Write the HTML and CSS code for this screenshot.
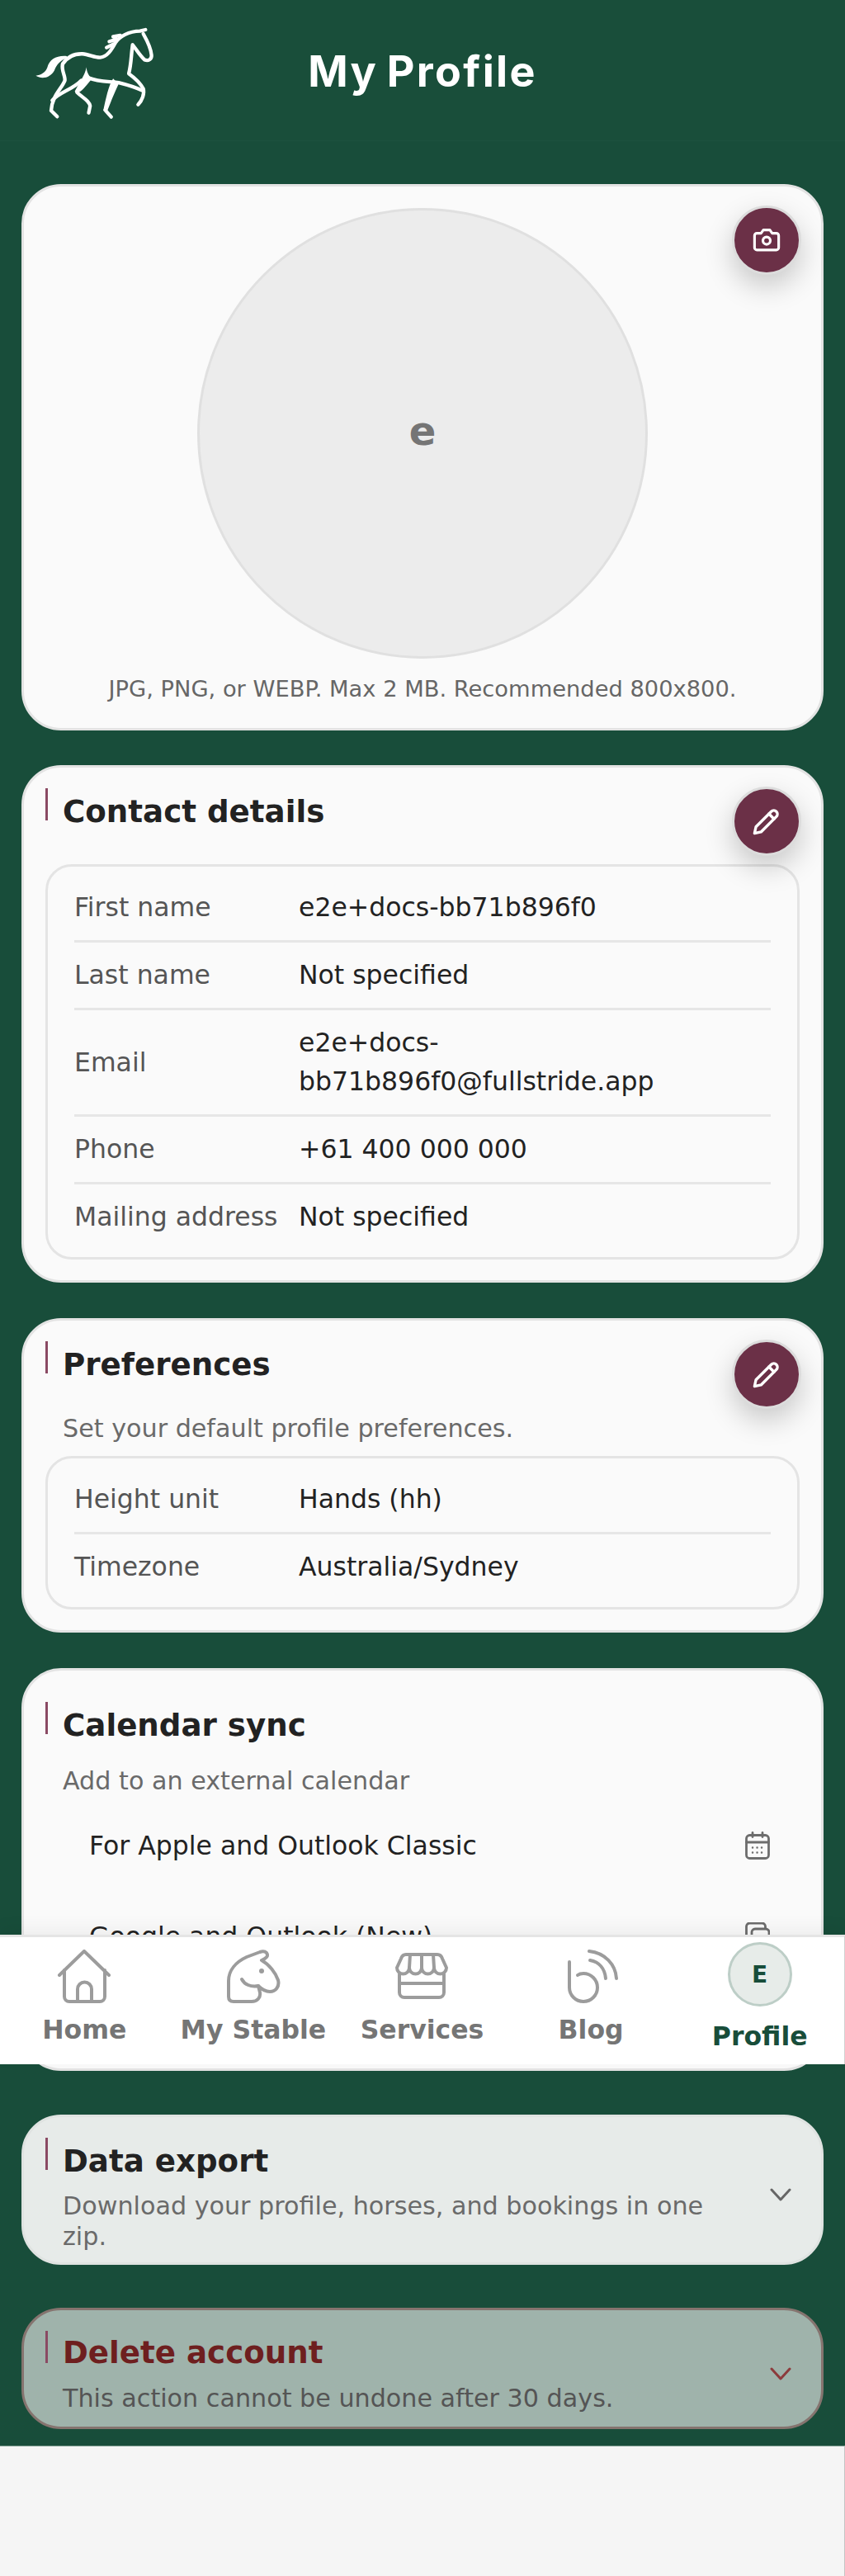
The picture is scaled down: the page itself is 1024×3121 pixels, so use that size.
FILE: index.html
```html
<!DOCTYPE html>
<html lang="en">
<head>
    <meta charset="UTF-8">
    <meta name="viewport" content="width=device-width, initial-scale=1.0">
    <title>My Profile</title>
    <link rel="stylesheet" href="styles.css">
</head>
<body>
    <div class="app">
        <!-- Header -->
        <header class="topbar">
            <svg class="logo" viewBox="120 35 445 340" fill="none" stroke="#fff" stroke-width="13" stroke-linecap="round" stroke-linejoin="round">
                <path d="M228 172C245 146 270 134 300 135C325 137 345 149 365 148C390 146 405 122 420 95C435 72 470 52 510 52L530 47"/>
                <path d="M522 62C535 85 550 115 552 140C553 155 540 162 527 157C512 145 497 120 483 102C478 135 478 175 469 207C490 222 510 240 522 262C527 280 518 305 503 320"/>
                <path d="M228 172C222 195 238 215 236 232C225 262 190 285 186 342L208 364"/>
                <path d="M190 305C215 275 265 265 296 232"/>
                <path d="M322 222C360 238 400 235 432 240C460 247 490 255 516 268"/>
                <path d="M280 275C300 295 325 305 328 325L323 350"/>
                <path d="M383 340L405 365"/>
                <path d="M412 100L388 112M425 82L398 90M438 68L412 72"/>
                <path fill="#fff" stroke="none" d="M243 143C205 140 180 155 172 185C165 205 148 212 130 215C155 230 185 220 198 195C205 175 220 158 243 150Z"/>
                <path fill="#fff" stroke="none" d="M314 183C312 205 300 222 272 272C290 285 305 260 335 225C322 215 316 200 314 183Z"/>
                <path fill="#fff" stroke="none" d="M412 225L432 245C415 280 400 320 390 345L376 342C385 300 395 250 412 225Z"/>
            </svg>
            <h1 class="page-title">My Profile</h1>
        </header>

        <main class="content">
            <!-- Photo -->
            <section class="card photo-card">
                <button class="fab">
                    <svg viewBox="0 0 32 32" fill="none" stroke="#fff" stroke-width="2.8" stroke-linejoin="round">
                        <path d="M3 11a2.500 2.500 0 0 1 2.500-2.500H10L12.500 5h7L22 8.500h4.500A2.500 2.500 0 0 1 29 11v13a2.500 2.500 0 0 1-2.500 2.500h-21A2.500 2.500 0 0 1 3 24z"/>
                        <circle cx="16" cy="16.500" r="4"/>
                    </svg>
                </button>
                <div class="avatar">e</div>
                <p class="photo-hint">JPG, PNG, or WEBP. Max 2 MB. Recommended 800x800.</p>
            </section>

            <!-- Contact details -->
            <section class="card contact-card">
                <button class="fab">
                    <svg viewBox="0 0 32 32" fill="none" stroke="#fff" stroke-width="3" stroke-linejoin="round" stroke-linecap="round">
                        <path d="M3 29l1.500-7L21 5.500a3.500 3.500 0 0 1 5.500 5.500L10 27.500z"/>
                        <path d="M18.500 8l5.500 5.500"/>
                    </svg>
                </button>
                <div class="section-head">
                    <span class="accent"></span>
                    <h2 class="section-title">Contact details</h2>
                </div>
                <div class="panel">
                    <div class="row"><span class="row-label">First name</span><span class="row-value">e2e+docs-bb71b896f0</span></div>
                    <div class="row"><span class="row-label">Last name</span><span class="row-value">Not specified</span></div>
                    <div class="row"><span class="row-label">Email</span><span class="row-value">e2e+docs-<br>bb71b896f0@fullstride.app</span></div>
                    <div class="row"><span class="row-label">Phone</span><span class="row-value">+61 400 000 000</span></div>
                    <div class="row"><span class="row-label">Mailing address</span><span class="row-value">Not specified</span></div>
                </div>
            </section>

            <!-- Preferences -->
            <section class="card prefs-card">
                <button class="fab">
                    <svg viewBox="0 0 32 32" fill="none" stroke="#fff" stroke-width="3" stroke-linejoin="round" stroke-linecap="round">
                        <path d="M3 29l1.500-7L21 5.500a3.500 3.500 0 0 1 5.500 5.500L10 27.500z"/>
                        <path d="M18.500 8l5.500 5.500"/>
                    </svg>
                </button>
                <div class="section-head">
                    <span class="accent"></span>
                    <h2 class="section-title">Preferences</h2>
                </div>
                <p class="section-desc prefs-desc">Set your default profile preferences.</p>
                <div class="panel prefs-panel">
                    <div class="row"><span class="row-label">Height unit</span><span class="row-value">Hands (hh)</span></div>
                    <div class="row"><span class="row-label">Timezone</span><span class="row-value">Australia/Sydney</span></div>
                </div>
            </section>

            <!-- Calendar sync -->
            <section class="card calendar-card">
                <div class="section-head">
                    <span class="accent"></span>
                    <h2 class="section-title">Calendar sync</h2>
                </div>
                <p class="section-desc calendar-desc">Add to an external calendar</p>
                <div class="sync-row">
                    <span>For Apple and Outlook Classic</span>
                    <svg class="sync-icon" viewBox="0 0 30 34" fill="none" stroke="#6d6d6d" stroke-width="2.8" stroke-linecap="round">
                        <rect x="1.500" y="4.500" width="27" height="28" rx="4"/>
                        <path d="M1.500 13h27M9 1.500v5M21 1.500v5"/>
                        <path stroke-width="2.400" stroke-dasharray="0.1 5.4" d="M9 19.500h13M9 25.500h13"/>
                    </svg>
                </div>
                <div class="sync-row">
                    <span>Google and Outlook (New)</span>
                    <svg class="sync-icon" viewBox="0 0 30 34" fill="none" stroke="#6d6d6d" stroke-width="2.8" stroke-linecap="round">
                        <path d="M1.500 24V5a4 4 0 0 1 4-4h15a4 4 0 0 1 4 4v2"/>
                        <rect x="8" y="8" width="21" height="24" rx="4"/>
                    </svg>
                </div>
            </section>

            <!-- Collapsed sections -->
            <section class="card collapse-card export-card">
                <div class="collapse-text">
                    <div class="section-head">
                        <span class="accent"></span>
                        <h2 class="section-title">Data export</h2>
                    </div>
                    <p class="section-desc">Download your profile, horses, and bookings in one zip.</p>
                </div>
                <svg class="chevron" viewBox="0 0 26 16" fill="none" stroke="#666" stroke-width="3" stroke-linecap="round" stroke-linejoin="round"><path d="M2 2l11 12L24 2"/></svg>
            </section>

            <section class="card collapse-card delete-card">
                <div class="collapse-text">
                    <div class="section-head">
                        <span class="accent"></span>
                        <h2 class="section-title">Delete account</h2>
                    </div>
                    <p class="section-desc">This action cannot be undone after 30 days.</p>
                </div>
                <svg class="chevron" viewBox="0 0 26 16" fill="none" stroke="#8c3b3c" stroke-width="3" stroke-linecap="round" stroke-linejoin="round"><path d="M2 2l11 12L24 2"/></svg>
            </section>
        </main>
        <div class="page-end"></div>

        <!-- Bottom nav -->
        <nav class="bottom-nav">
            <a class="nav-item">
                <svg class="nav-icon" viewBox="0 0 66 68" fill="none" stroke="#9c9c9c" stroke-width="4" stroke-linecap="round" stroke-linejoin="round">
                    <path d="M3 31L33 2l30 29"/>
                    <path d="M9 25v32a6 6 0 0 0 6 6h37a6 6 0 0 0 6-6V25"/>
                    <path d="M25 63V48a8.500 8.500 0 0 1 17 0v15"/>
                </svg>
                <span>Home</span>
            </a>
            <a class="nav-item">
                <svg class="nav-icon" viewBox="0 0 66 68" fill="none" stroke="#9c9c9c" stroke-width="4" stroke-linecap="round" stroke-linejoin="round">
                    <path d="M9 63H31C38 63 42 58 41 52L39 44C44 49 48 51 53 51C60 51 65 45 63 37C60 28 52 18 43 13C48 11 52 8 49 4C47 2 44 2 41 3L25 9C12 15 3 25 3 38V57C3 61 5 63 9 63Z"/>
                    <path d="M19 36C22 42 30 46 39 44"/>
                    <circle cx="43" cy="26" r="3" fill="#9c9c9c" stroke="none"/>
                </svg>
                <span>My Stable</span>
            </a>
            <a class="nav-item">
                <svg class="nav-icon" viewBox="0 0 66 68" fill="none" stroke="#9c9c9c" stroke-width="4" stroke-linecap="round" stroke-linejoin="round">
                    <path d="M6 30v22a6 6 0 0 0 6 6h42a6 6 0 0 0 6-6V30"/>
                    <path d="M6 41h54"/>
                    <path d="M14 6H52c3 0 5 2 6 5l5 11a7.500 7.500 0 0 1-15 0a7.500 7.500 0 0 1-15 0a7.500 7.500 0 0 1-15 0a7.500 7.500 0 0 1-15 0l5-11c1-3 3-5 6-5z"/>
                    <path d="M19 6l-1 16M33 6v16M47 6l1 16"/>
                </svg>
                <span>Services</span>
            </a>
            <a class="nav-item">
                <svg class="nav-icon" viewBox="0 0 66 68" fill="none" stroke="#9c9c9c" stroke-width="4" stroke-linecap="round" stroke-linejoin="round">
                    <path d="M7 15V46a17 17 0 1 0 17-17c-3 0-5 .5-7 2"/>
                    <path d="M31 2C50 4 63 18 64 35"/>
                    <path d="M32 13C43 15 50 23 51 35"/>
                </svg>
                <span>Blog</span>
            </a>
            <a class="nav-item nav-item-active">
                <span class="nav-avatar">E</span>
                <span>Profile</span>
            </a>
        </nav>
    </div>
</body>
</html>
```
FILE: styles.css
```css
html, body {
    margin: 0;
    padding: 0;
}

body {
    font-family: "DejaVu Sans", sans-serif;
    background-color: #f5f5f5;
    color: #222;
}

.app {
    position: relative;
    height: 3121px;
    overflow: hidden;
}

.topbar {
    height: 170px;
    box-sizing: content-box;
    background-color: #194e3a;
    border-bottom: 1px solid #1c513e;
    display: flex;
    align-items: center;
    justify-content: center;
    position: relative;
}

.logo {
    position: absolute;
    left: 40px;
    top: 32px;
    width: 148px;
    height: 113px;
}

.page-title {
    margin: 3px 0 0;
    font-family: Inter, sans-serif;
    font-weight: 700;
    font-size: 52px;
    letter-spacing: 2.300px;
    word-spacing: -4px;
    color: #fff;
}

.content {
    background-color: #184d3a;
    padding: 52px 26px 20px;
    height: 2792px;
    box-sizing: border-box;
    display: flex;
    flex-direction: column;
}

.page-end {
    height: 158px;
    background-color: #f5f5f5;
    border-top: 1px solid #7d9c8f;
    border-right: 1px solid #c4c4c4;
}

.card {
    position: relative;
    background-color: #fafafa;
    border: 3px solid #e3e3e3;
    border-radius: 48px;
    box-sizing: border-box;
    padding: 25px 26px;
}

.photo-card {
    height: 662px;
    display: flex;
    flex-direction: column;
    align-items: center;
}

.contact-card {
    margin-top: 42px;
    height: 627px;
}

.prefs-card {
    margin-top: 43px;
    height: 381px;
}

.calendar-card {
    margin-top: 43px;
    height: 488px;
    padding-top: 38px;
}

.collapse-card {
    display: flex;
    align-items: center;
    justify-content: space-between;
}

.export-card {
    margin-top: 53px;
    height: 182px;
    background-color: #e7ebe9;
    border-color: #dfe3e1;
}

.delete-card {
    margin-top: 52px;
    height: 147px;
    background-color: #9fb3ab;
    border-color: #85746f;
}

.fab {
    position: absolute;
    top: 23px;
    right: 24px;
    width: 84px;
    height: 84px;
    padding: 0;
    border: 3px solid #dcdcdc;
    border-radius: 50%;
    background-color: #6b3047;
    box-shadow: 0 14px 34px rgba(0,0,0,0.2);
    display: flex;
    align-items: center;
    justify-content: center;
    z-index: 2;
}

.fab svg {
    width: 36px;
    height: 36px;
}

.avatar {
    width: 546px;
    height: 546px;
    margin-top: 1px;
    padding-bottom: 6px;
    box-sizing: border-box;
    border: 3px solid #e0e0e0;
    border-radius: 50%;
    background-color: #ececec;
    color: #757575;
    font-size: 48px;
    font-weight: 700;
    display: flex;
    align-items: center;
    justify-content: center;
}

.photo-hint {
    margin: 21px 0 0;
    font-size: 27.300px;
    color: #666;
}

.section-head {
    display: flex;
    align-items: flex-start;
    gap: 18px;
}

.accent {
    width: 3px;
    height: 39px;
    background-color: #8a4a63;
    flex-shrink: 0;
}

.section-title {
    margin: 5px 0 0;
    font-size: 37.200px;
    line-height: 46px;
    font-weight: 700;
    color: #222;
}

.section-desc {
    margin: 13px 0 0 21px;
    font-size: 30.200px;
    line-height: 37px;
    color: #6a6a6a;
}

.prefs-desc {
    margin-top: 36px;
}

.calendar-desc {
    margin-top: 26px;
    margin-bottom: 5px;
}

.panel {
    margin-top: 41px;
    border: 3px solid #e4e4e4;
    border-radius: 32px;
    padding: 10px 32px 9px;
}

.prefs-panel {
    margin-top: 15px;
}

.row {
    display: flex;
    align-items: center;
    padding: 16px 0;
    border-bottom: 3px solid #e6e6e6;
    font-size: 31.500px;
    line-height: 47px;
}

.row:last-child {
    border-bottom: none;
}

.row-label {
    width: 272px;
    flex-shrink: 0;
    color: #555;
}

.row-value {
    color: #222;
}

.sync-row {
    display: flex;
    align-items: center;
    justify-content: space-between;
    margin: 0 36px 0 53px;
    height: 110px;
    font-size: 31.500px;
}

.sync-icon {
    width: 30px;
    height: 34px;
}

.chevron {
    width: 26px;
    height: 16px;
    flex-shrink: 0;
    margin: 12px 10px 0 0;
}

.collapse-text {
    width: 840px;
    align-self: flex-start;
}

.delete-card .section-title {
    margin-top: 3px;
    color: #6e1f1f;
}

.delete-card .section-desc {
    margin-top: 14px;
    color: #555;
}

.bottom-nav {
    position: absolute;
    left: 0;
    right: 0;
    top: 2344px;
    height: 157px;
    box-sizing: border-box;
    background-color: #fff;
    border-top: 3px solid #e5e5e5;
    border-right: 1px solid #d0d0d0;
    box-shadow: 0 -8px 20px rgba(0,0,0,0.05);
    display: grid;
    grid-template-columns: repeat(5, 1fr);
}

.nav-item {
    display: flex;
    flex-direction: column;
    align-items: center;
    padding-top: 15px;
    font-size: 31.500px;
    font-weight: 700;
    color: #757575;
}

.nav-icon {
    width: 66px;
    height: 68px;
    margin-bottom: 11px;
}

.nav-item-active {
    padding-top: 6px;
    color: #184d3a;
}

.nav-avatar {
    width: 78px;
    height: 78px;
    box-sizing: border-box;
    border: 3px solid #bdcec7;
    border-radius: 50%;
    background-color: #e7ece9;
    font-size: 28px;
    display: flex;
    align-items: center;
    justify-content: center;
    margin-bottom: 18px;
}
```
